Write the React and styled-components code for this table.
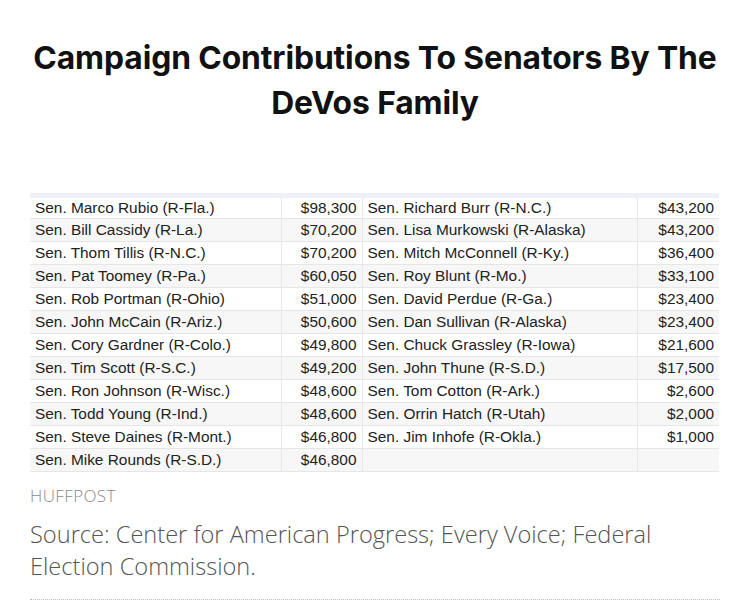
import React from "react";
import styled, { createGlobalStyle } from "styled-components";

const GlobalStyle = createGlobalStyle`
  body {
    margin: 0;
    background: #fff;
  }
`;

const Page = styled.div`
  width: 750px;
  height: 607px;
  overflow: hidden;
  padding: 0 30px 0 30px;
  box-sizing: border-box;
`;

const Title = styled.h1`
  margin: 0 -20px;
  padding-top: 35px;
  font-family: Inter, "Noto Sans", sans-serif;
  font-weight: 700;
  font-size: 31.8px;
  line-height: 45px;
  letter-spacing: -0.1px;
  color: #111;
  text-align: center;
`;

const Table = styled.table`
  margin-top: 68px;
  width: 689px;
  border-collapse: collapse;
  font-family: "Liberation Sans", Arial, sans-serif;
  font-size: 15.4px;
  color: #222;
  border-top: 5px solid #eef0f7;
`;

const Row = styled.tr`
  height: 23px;
  background: ${(p) => (p.$alt ? "#f7f7f7" : "#fff")};
  border-bottom: 1px solid #e6e6e6;
`;

const Cell = styled.td`
  padding: 0 5px;
  white-space: nowrap;
  text-align: ${(p) => (p.$num ? "right" : "left")};
  width: ${(p) => p.$w}px;
  border-right: ${(p) => (p.$last ? "none" : "1px solid #e8e8e8")};
`;

const Credit = styled.div`
  margin-top: 12px;
  font-family: "Open Sans", Lato, sans-serif;
  font-weight: 300;
  font-size: 17px;
  letter-spacing: 0.4px;
  color: #8a8a8a;
`;

const Source = styled.p`
  margin: 11px 0 0;
  font-family: "Open Sans", Lato, sans-serif;
  font-weight: 300;
  font-size: 23.6px;
  line-height: 32px;
  color: #555;
`;

const Dots = styled.div`
  margin-top: 17px;
  border-top: 1px dotted #bbb;
`;

const left = [
  ["Sen. Marco Rubio (R-Fla.)", "$98,300"],
  ["Sen. Bill Cassidy (R-La.)", "$70,200"],
  ["Sen. Thom Tillis (R-N.C.)", "$70,200"],
  ["Sen. Pat Toomey (R-Pa.)", "$60,050"],
  ["Sen. Rob Portman (R-Ohio)", "$51,000"],
  ["Sen. John McCain (R-Ariz.)", "$50,600"],
  ["Sen. Cory Gardner (R-Colo.)", "$49,800"],
  ["Sen. Tim Scott (R-S.C.)", "$49,200"],
  ["Sen. Ron Johnson (R-Wisc.)", "$48,600"],
  ["Sen. Todd Young (R-Ind.)", "$48,600"],
  ["Sen. Steve Daines (R-Mont.)", "$46,800"],
  ["Sen. Mike Rounds (R-S.D.)", "$46,800"],
];

const right = [
  ["Sen. Richard Burr (R-N.C.)", "$43,200"],
  ["Sen. Lisa Murkowski (R-Alaska)", "$43,200"],
  ["Sen. Mitch McConnell (R-Ky.)", "$36,400"],
  ["Sen. Roy Blunt (R-Mo.)", "$33,100"],
  ["Sen. David Perdue (R-Ga.)", "$23,400"],
  ["Sen. Dan Sullivan (R-Alaska)", "$23,400"],
  ["Sen. Chuck Grassley (R-Iowa)", "$21,600"],
  ["Sen. John Thune (R-S.D.)", "$17,500"],
  ["Sen. Tom Cotton (R-Ark.)", "$2,600"],
  ["Sen. Orrin Hatch (R-Utah)", "$2,000"],
  ["Sen. Jim Inhofe (R-Okla.)", "$1,000"],
  ["", ""],
];

export default function App() {
  return (
    <Page>
      <GlobalStyle />
      <Title>
        Campaign Contributions To Senators By The
        <br />
        DeVos Family
      </Title>

      <Table>
        <tbody>
          {left.map((l, i) => (
            <Row key={i} $alt={i % 2 === 1}>
              <Cell $w={241}>{l[0]}</Cell>
              <Cell $w={70} $num>{l[1]}</Cell>
              <Cell $w={265}>{right[i][0]}</Cell>
              <Cell $w={71} $num $last>{right[i][1]}</Cell>
            </Row>
          ))}
        </tbody>
      </Table>

      <Credit>HUFFPOST</Credit>
      <Source>
        Source: Center for American Progress; Every Voice; Federal
        <br />
        Election Commission.
      </Source>
      <Dots />
    </Page>
  );
}
